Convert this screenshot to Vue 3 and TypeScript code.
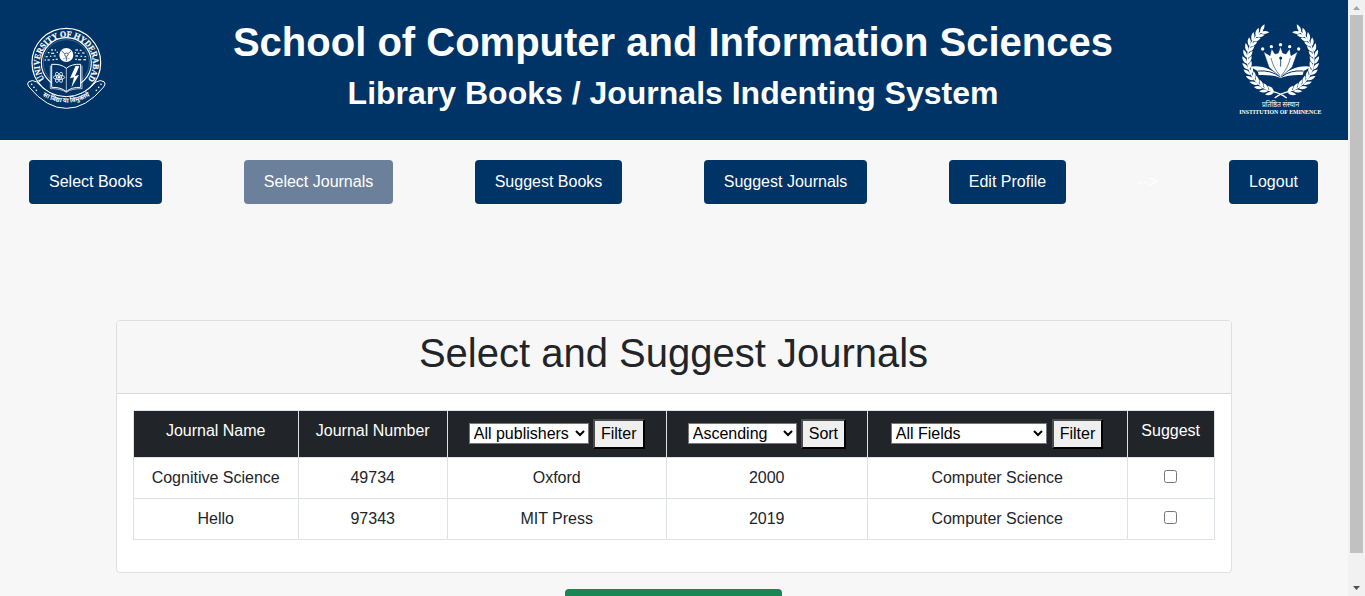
<script setup lang="ts">
import { ref } from 'vue'

interface Journal {
  name: string
  number: string
  publisher: string
  year: string
  field: string
  suggested: boolean
}

interface Leaf {
  x: number
  y: number
  angle: number
}

const navLinks = ['Select Books', 'Select Journals', 'Suggest Books', 'Suggest Journals', 'Edit Profile']
const activeLink = 'Select Journals'

const publisher = ref('All publishers')
const order = ref('Ascending')
const field = ref('All Fields')

const journals = ref<Journal[]>([
  { name: 'Cognitive Science', number: '49734', publisher: 'Oxford', year: '2000', field: 'Computer Science', suggested: false },
  { name: 'Hello', number: '97343', publisher: 'MIT Press', year: '2019', field: 'Computer Science', suggested: false },
])

// Leaves of the right half of the laurel wreath; the left half is mirrored.
const leaves: Leaf[] = []
for (let i = 0; i < 14; i++) {
  const deg = 72 - i * 10.1
  const t = (deg * Math.PI) / 180
  for (const side of [-1, 1]) {
    const r = 101 + side * 7
    leaves.push({
      x: 152 + r * Math.cos(t),
      y: 136 + r * Math.sin(t),
      angle: deg - 90 + side * 30,
    })
  }
}

// Small ornaments on either side of the sun disc.
const dots: [number, number, number][] = [
  [108, 96, 6], [118, 96, 4], [98, 104, 5], [110, 106, 9], [124, 103, 4],
  [92, 116, 6], [104, 115, 4], [116, 114, 6], [88, 126, 4], [98, 126, 7], [112, 125, 5], [122, 124, 6],
  [182, 96, 8], [194, 97, 5], [178, 104, 4], [188, 106, 5], [202, 105, 7],
  [182, 114, 8], [196, 115, 5], [208, 116, 5], [180, 124, 5], [191, 125, 9], [206, 125, 8],
]
</script>

<template>
  <div class="viewport">
    <div class="page">
      <header class="banner">
        <svg class="seal" viewBox="0 0 300 300" aria-label="University of Hyderabad">
          <defs>
            <path id="seal-text" d="M 86 184 A 80 80 0 1 1 216 184" />
            <path id="motto-text" d="M 55 217 Q 151 291 247 217" />
          </defs>
          <g fill="none" stroke="#fff">
            <circle cx="151" cy="134" r="103" stroke-width="3.6" />
            <circle cx="151" cy="134" r="75" stroke-width="3.4" />
            <circle cx="151" cy="134" r="69" stroke-width="1.4" opacity=".5" />
          </g>
          <text class="seal-name"><textPath href="#seal-text" textLength="352" lengthAdjust="spacingAndGlyphs">UNIVERSITY OF HYDERABAD</textPath></text>
          <rect v-for="(d, i) in dots" :key="i" :x="d[0] - d[2] / 2" :y="d[1] - 2" :width="d[2]" height="4" fill="#fff" opacity=".85" />
          <circle cx="151" cy="111" r="21" fill="#fff" />
          <g stroke="#036" stroke-width="2.2" fill="none">
            <circle cx="151" cy="110" r="5" fill="#fff" />
            <path d="M151 116V129M146 107L136 98M156 107L166 98" />
            <path d="M141 123Q151 115 161 123" opacity=".5" />
          </g>
          <path class="book" d="M107 139Q135 137 151 151Q167 137 194 139V208Q166 207 151 221Q135 207 107 208Z" />
          <path class="book-spine" d="M151 151V220M103 143V212Q134 211 151 223Q168 211 198 212V143" />
          <g fill="none" stroke="#fff" stroke-width="2.4">
            <ellipse cx="129" cy="178" rx="17" ry="6.5" />
            <ellipse cx="129" cy="178" rx="17" ry="6.5" transform="rotate(60 129 178)" />
            <ellipse cx="129" cy="178" rx="17" ry="6.5" transform="rotate(120 129 178)" />
          </g>
          <circle cx="129" cy="178" r="4" fill="#fff" />
          <path d="M179 143L162 181L174 178L166 209L189 171L177 174L190 145Z" fill="#fff" />
          <path class="ribbon" d="M62 192Q49 184 38 191Q31 197 39 207Q93 272 151 271Q209 272 263 207Q271 197 264 191Q253 184 240 192Q203 235 151 236Q99 235 62 192Z" />
          <g fill="#fff">
            <circle cx="47" cy="199" r="2.5" /><circle cx="54" cy="208" r="2.5" /><circle cx="61" cy="217" r="2.5" />
            <circle cx="255" cy="199" r="2.5" /><circle cx="248" cy="208" r="2.5" /><circle cx="241" cy="217" r="2.5" />
          </g>
          <text class="seal-motto"><textPath href="#motto-text" startOffset="50%" text-anchor="middle" textLength="150" lengthAdjust="spacingAndGlyphs">सा विद्या या विमुक्तये</textPath></text>
        </svg>

        <div class="titles">
          <h1>School of Computer and Information Sciences</h1>
          <h2>Library Books / Journals Indenting System</h2>
        </div>

        <svg class="eminence" viewBox="0 0 354 330" aria-label="Institution of Eminence">
          <defs>
            <g id="branch">
              <path d="M134 252Q154 236 179 232A101 101 0 0 0 205 50" fill="none" stroke="#fff" stroke-width="4" />
              <path
                v-for="(l, i) in leaves"
                :key="i"
                d="M-13 0Q-2 -10 14 0Q0 9 -13 0Z"
                fill="#fff"
                :transform="`translate(${l.x} ${l.y}) rotate(${l.angle})`"
              />
            </g>
          </defs>
          <use href="#branch" />
          <use href="#branch" transform="translate(304 0) scale(-1 1)" />
          <g fill="#fff">
            <circle cx="98" cy="105" r="5" /><circle cx="124" cy="98" r="5" /><circle cx="151.5" cy="92" r="5.2" />
            <circle cx="179" cy="98" r="5" /><circle cx="206" cy="105" r="5" />
            <path d="M60 158Q94 154 117 166Q141 176 152 190Q162 176 186 166Q210 154 244 158L221 171L218 183Q176 181 152 192Q126 181 86 183L83 171Z" />
          </g>
          <path d="M84 171Q124 168 149 188M220 171Q180 168 155 188" fill="none" stroke="#036" stroke-width="3" />
          <path
            d="M101 113L120 125L125 104L135 120L145 117L151.500 98L158 117L168 120L179 104L183 125L203 113L186 160L152 190L117 160Z"
            fill="#fff"
            stroke="#036"
            stroke-width="1.5"
          />
          <path d="M123 132Q130 162 150 185M181 132Q174 162 154 185" fill="none" stroke="#036" stroke-width="1.8" />
          <path d="M152 132V158" stroke="#036" stroke-width="2.5" />
          <circle cx="152" cy="132" r="4.500" fill="#036" />
          <text class="hindi" x="152" y="278" text-anchor="middle" textLength="112" lengthAdjust="spacingAndGlyphs">प्रतिष्ठित संस्थान</text>
          <text class="motto" x="28" y="301" textLength="246" lengthAdjust="spacingAndGlyphs">INSTITUTION OF EMINENCE</text>
        </svg>
      </header>

      <nav class="menu">
        <a v-for="link in navLinks" :key="link" class="menu-link" :class="{ active: link === activeLink }">{{ link }}</a>
        <span class="menu-mark">--&gt;</span>
        <a class="menu-link">Logout</a>
      </nav>

      <main class="content">
        <section class="card">
          <div class="card-header"><h3>Select and Suggest Journals</h3></div>
          <div class="card-body">
            <table>
              <colgroup>
                <col class="c-name" /><col class="c-number" /><col class="c-publisher" />
                <col class="c-year" /><col class="c-field" /><col class="c-suggest" />
              </colgroup>
              <thead>
                <tr>
                  <th>Journal Name</th>
                  <th>Journal Number</th>
                  <th>
                    <div class="controls">
                      <select v-model="publisher" class="s-publisher">
                        <option>All publishers</option><option>Oxford</option><option>MIT Press</option>
                      </select>
                      <button class="b-filter">Filter</button>
                    </div>
                  </th>
                  <th>
                    <div class="controls">
                      <select v-model="order" class="s-order">
                        <option>Ascending</option><option>Descending</option>
                      </select>
                      <button class="b-sort">Sort</button>
                    </div>
                  </th>
                  <th>
                    <div class="controls fields">
                      <select v-model="field" class="s-field">
                        <option>All Fields</option><option>Computer Science</option>
                      </select>
                      <button class="b-filter">Filter</button>
                    </div>
                  </th>
                  <th>Suggest</th>
                </tr>
              </thead>
              <tbody>
                <tr v-for="j in journals" :key="j.number">
                  <td>{{ j.name }}</td>
                  <td>{{ j.number }}</td>
                  <td>{{ j.publisher }}</td>
                  <td>{{ j.year }}</td>
                  <td>{{ j.field }}</td>
                  <td><input v-model="j.suggested" type="checkbox" /></td>
                </tr>
              </tbody>
            </table>
          </div>
        </section>
        <button class="submit" aria-label="Submit"></button>
      </main>
    </div>

    <div class="scrollbar">
      <svg width="17" height="17" viewBox="0 0 17 17"><path d="M5 10L8.5 6L12 10Z" fill="#a3a3a3" /></svg>
      <div class="thumb"></div>
      <svg width="17" height="17" viewBox="0 0 17 17"><path d="M5 7H12L8.5 11Z" fill="#505050" /></svg>
    </div>
  </div>
</template>

<style>
html,
body {
  margin: 0;
  overflow: hidden;
}
</style>

<style scoped>
.viewport {
  display: flex;
  width: 1365px;
  height: 596px;
  overflow: hidden;
  background: #f7f7f7;
  color: #212529;
  font: 16px/24px "Liberation Sans", Arial, sans-serif;
}
.viewport *,
.viewport *::before {
  box-sizing: border-box;
}
.page {
  width: 1348px;
  height: 596px;
  overflow: hidden;
}
.banner {
  display: flex;
  justify-content: space-between;
  height: 140px;
  background: #036;
  color: #fff;
}
.seal {
  width: 100px;
  height: 100px;
  margin: 18px 0 0 16px;
}
.seal-name {
  fill: #fff;
  stroke: #fff;
  stroke-width: 0.6px;
  font: bold 26px "Liberation Serif", serif;
}
.seal-motto {
  fill: #fff;
  font: bold 20px "Noto Sans", "Noto Sans Devanagari", sans-serif;
}
.book,
.ribbon {
  fill: #036;
  stroke: #fff;
  stroke-width: 3;
}
.book-spine {
  fill: none;
  stroke: #fff;
  stroke-width: 2;
}
.titles {
  width: 1000px;
  text-align: center;
}
h1,
h2,
h3 {
  margin: 0;
}
h1 {
  margin-top: 18px;
  font-size: 40px;
  line-height: 48px;
  white-space: nowrap;
}
h2 {
  margin-top: 8px;
  font-size: 32px;
  line-height: 38px;
  white-space: nowrap;
}
.eminence {
  width: 118px;
  height: 110px;
  margin-top: 14px;
}
.hindi {
  fill: #fff;
  font: 22px "Noto Sans", "Noto Sans Devanagari", sans-serif;
}
.motto {
  fill: #fff;
  font: bold 16px "Liberation Serif", serif;
}
.menu {
  display: flex;
  justify-content: space-between;
  height: 180px;
  padding: 20px 30px 0 29px;
}
.menu-link {
  height: 44px;
  padding: 0 20px;
  border-radius: 4px;
  background: #036;
  color: #fff;
  line-height: 43px;
}
.menu-link.active {
  background: #6b819b;
}
.menu-mark {
  margin: 0 -10px;
  color: #fff;
  line-height: 43px;
}
.content {
  display: flex;
  flex-direction: column;
  align-items: center;
}
.card {
  width: 1116px;
  height: 253px;
  border: 1px solid #dfdfdf;
  border-radius: 4px;
  background: #fff;
}
.card-header {
  height: 73px;
  padding: 8px 1px 0 0;
  border-bottom: 1px solid #d8d8d8;
  border-radius: 3px 3px 0 0;
  background: #f7f7f7;
  text-align: center;
}
h3 {
  font-size: 40px;
  font-weight: 400;
  line-height: 48px;
}
.card-body {
  padding: 16px;
}
table {
  width: 1082px;
  border-collapse: collapse;
  table-layout: fixed;
  text-align: center;
}
.c-name { width: 165px; }
.c-number { width: 149px; }
.c-publisher { width: 219px; }
.c-year { width: 201px; }
.c-field { width: 260px; }
.c-suggest { width: 87px; }
th,
td {
  height: 41px;
  padding: 8px 0.6px 8px 0;
  border: 1px solid #dee2e6;
  vertical-align: top;
}
th {
  height: 47px;
  background: #212529;
  color: #fff;
  font-weight: 400;
}
.controls {
  display: flex;
  align-items: center;
  justify-content: center;
  gap: 4px;
  height: 30px;
}
.controls.fields {
  gap: 5px;
  padding-right: 1px;
}
select,
.controls button {
  margin: 0;
  color: #000;
  font: 16px "Liberation Sans", Arial, sans-serif;
}
select {
  height: 21px;
  margin-top: -1px;
  border: 1px solid #767676;
  border-radius: 0;
  background-color: #fff;
}
.controls button {
  height: 30px;
  padding: 1px 6px;
  border: 2px outset #767676;
  border-color: #4c4c4c #000 #000 #4c4c4c;
  border-radius: 0;
  background: #efefef;
}
.s-publisher { width: 120px; }
.s-order { width: 109px; }
.s-field { width: 156px; }
.b-filter { width: 52px; }
.b-sort { width: 45px; }
.fields .b-filter { width: 51px; }
td input {
  display: block;
  width: 13px;
  height: 13px;
  margin: 4px auto 0;
}
.submit {
  width: 217px;
  height: 38px;
  margin: 16px 1px 0 0;
  border: 0;
  border-radius: 4px;
  background: #198754;
}
.scrollbar {
  display: flex;
  flex-direction: column;
  width: 17px;
  background: #f1f1f1;
}
.scrollbar svg {
  flex: none;
}
.thumb {
  height: 538px;
  margin: -2px 2px auto;
  background: #c1c1c1;
}
</style>
